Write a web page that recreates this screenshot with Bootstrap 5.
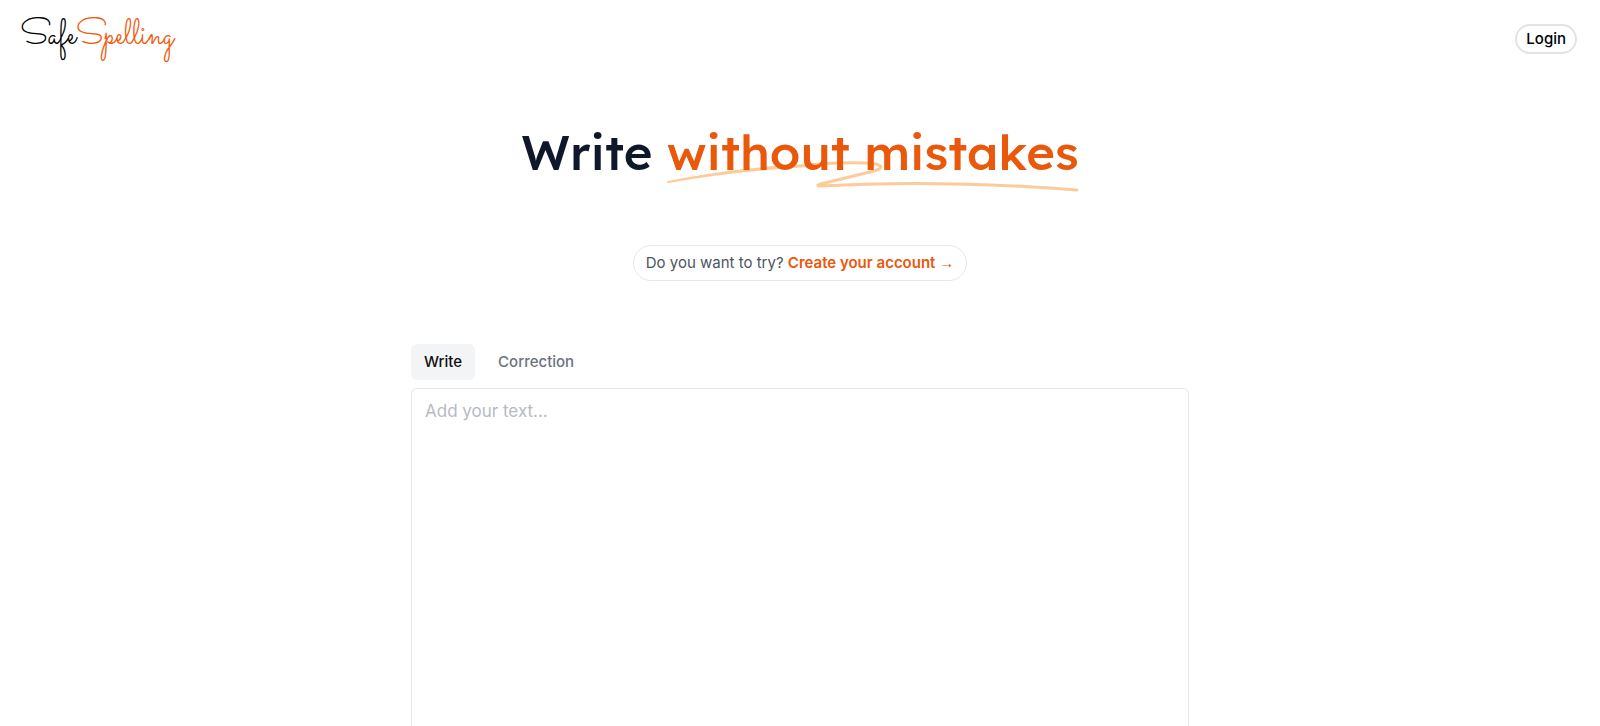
<!DOCTYPE html>
<html lang="en">
<head>
<meta charset="utf-8">
<meta name="viewport" content="width=device-width, initial-scale=1">
<title>SafeSpelling</title>
<link href="https://cdn.jsdelivr.net/npm/bootstrap@5.3.0/dist/css/bootstrap.min.css" rel="stylesheet">
<style>
  body { font-family: Inter, "Liberation Sans", sans-serif; color: #0f172a; background: #fff; }
  .orange { color: #ea580c; }
  .topbar { padding: 16px 23px 16px 20px; margin-bottom: 40px; }
  .brand { font: 400 34px/40px Sacramento, "Dancing Script", Lato, cursive; color: #000; }
  .brand .orange { color: #f05a0a; }
  .btn-login { border: 2px solid #e0e3e8; border-radius: 16px; padding: 1px 9px; font-size: 15px; font-weight: 500; line-height: 24px; color: #000; margin-top: 6px; }
  .headline { font: 500 49px/72px Lexend, Inter, sans-serif; margin: 4px 0 57px; }
  .swash { position: absolute; left: 0; top: 44px; width: 100%; height: 32px; z-index: -1; }
  .pill { border: 1px solid #e5e7eb; padding: 5px 12px; font-size: 15px; line-height: 24px; color: #4b5563; margin-bottom: 63px; }
  .pill a { font-weight: 600; }
  .arrow { font-family: "Liberation Sans", sans-serif; font-weight: 400; line-height: 1; }
  .editor { max-width: 778px; }
  .tabs { gap: 10px; }
  .tabs .nav-link { border: 0; background: transparent; padding: 6px 13px; font-size: 15px; line-height: 24px; font-weight: 500; color: #6b7280; border-radius: 6px; }
  .tabs .nav-link.active { background: #f3f4f6; color: #111; }
  .draft { border: 1px solid #e5e7eb; border-bottom: 0; border-radius: 6px 6px 0 0; padding: 8px 13px; font-size: 17px; line-height: 28px; resize: none; }
  .draft::placeholder { color: #b6bac3; }
</style>
</head>
<body>
<div class="min-vh-100 d-flex flex-column">
  <header class="topbar d-flex justify-content-between align-items-center">
    <a class="brand text-decoration-none" href="#">Safe<span class="orange">Spelling</span></a>
    <button type="button" class="btn btn-login bg-white">Login</button>
  </header>
  <main class="flex-grow-1 d-flex flex-column align-items-center">
    <h1 class="headline position-relative z-0 text-center">Write <span class="orange position-relative d-inline-block">without mistakes<svg class="swash" viewBox="0 0 410 32" preserveAspectRatio="none" aria-hidden="true"><path fill="#fdcb98" d="M1 21Q70 7 140 4V7Q70 11 1 23Q-1 22 1 21Z"/><path fill="none" stroke="#fdcb98" stroke-width="3" stroke-linecap="round" stroke-linejoin="round" d="M138 5Q186 1 208 4C216 6 213 9 206 11L153 24Q147 26 153 26C240 21 330 24 408 30"/></svg></span></h1>
    <p class="pill rounded-pill">Do you want to try? <a class="orange text-decoration-none" href="#">Create your account <span class="arrow">→</span></a></p>
    <section class="editor w-100 flex-grow-1 d-flex flex-column">
      <div class="tabs nav mb-2" role="tablist">
        <button class="nav-link active" type="button" role="tab" aria-selected="true">Write</button>
        <button class="nav-link" type="button" role="tab" aria-selected="false">Correction</button>
      </div>
      <textarea class="draft w-100 flex-grow-1" aria-label="Your text" placeholder="Add your text..."></textarea>
    </section>
  </main>
</div>
<script src="https://cdn.jsdelivr.net/npm/bootstrap@5.3.0/dist/js/bootstrap.bundle.min.js"></script>
</body>
</html>
